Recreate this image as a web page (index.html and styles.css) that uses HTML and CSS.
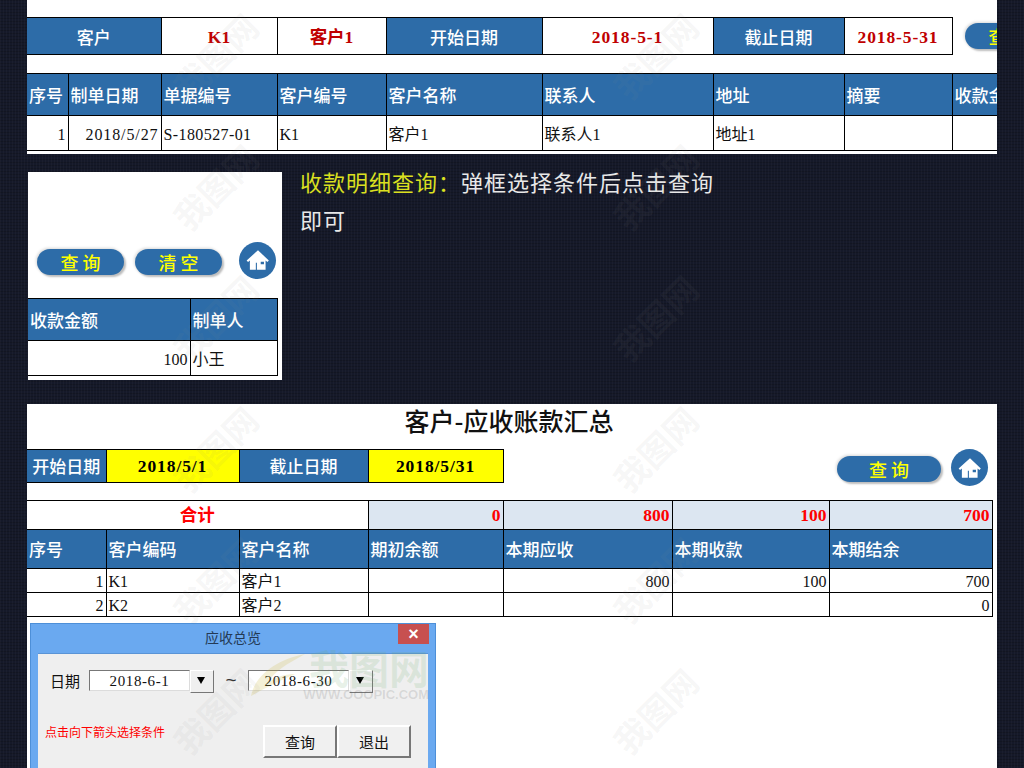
FILE: index.html
```html
<!DOCTYPE html>
<html lang="zh-CN">
<head>
<meta charset="UTF-8">
<meta name="viewport" content="width=device-width, initial-scale=1.0">
<title>应收账款</title>
<link rel="stylesheet" href="styles.css">
</head>
<body>

<div class="page">

  <div class="sheet sheet-top">
    <div class="query-row">
      <table class="grid crit">
        <colgroup><col class="w134"><col class="w116"><col class="w109"><col class="w156"><col class="w171"><col class="w131"><col class="w108"></colgroup>
        <tr>
          <th class="center">客户</th>
          <td class="red center">K1</td>
          <td class="red center">客户1</td>
          <th class="center">开始日期</th>
          <td class="red center date">2018-5-1</td>
          <th class="center">截止日期</th>
          <td class="red center date">2018-5-31</td>
        </tr>
      </table>
      <button class="pill pill-top">查 询</button>
    </div>
    <table class="grid detail">
      <colgroup><col class="w41"><col class="w93"><col class="w116"><col class="w109"><col class="w156"><col class="w171"><col class="w131"><col class="w108"><col class="w190"></colgroup>
      <tr class="head">
        <th>序号</th><th>制单日期</th><th>单据编号</th><th>客户编号</th><th>客户名称</th><th>联系人</th><th>地址</th><th>摘要</th><th>收款金额</th>
      </tr>
      <tr class="line">
        <td class="right">1</td><td class="right date">2018/5/27</td><td class="code">S-180527-01</td><td>K1</td><td>客户1</td><td>联系人1</td><td>地址1</td><td></td><td></td>
      </tr>
    </table>
  </div>

  <div class="middle">
    <div class="sheet sheet-side">
      <div class="side-tools">
        <button class="pill pill-small">查 询</button>
        <button class="pill pill-small">清 空</button>
        <span class="home">
          <svg viewBox="0 0 24 24" width="26" height="26"><path fill="#fff" fill-rule="evenodd" d="M12 3 1.500 12.500l1.300 1.400 1.700-1.400V21h5.500v-6.500h1V21h8v-8.500l1.700 1.400 1.300-1.400zM14.500 13.500h3v2.500h-3z"/></svg>
        </span>
      </div>
      <table class="grid side">
        <colgroup><col class="w162"><col class="w87"></colgroup>
        <tr class="head"><th>收款金额</th><th>制单人</th></tr>
        <tr class="line"><td class="right">100</td><td>小王</td></tr>
      </table>
    </div>
    <p class="note"><span class="note-key">收款明细查询：</span>弹框选择条件后点击查询即可</p>
  </div>

  <div class="sheet sheet-sum">
    <h2 class="title">客户-应收账款汇总</h2>
    <div class="date-row">
      <table class="grid dates">
        <colgroup><col class="w79"><col class="w133"><col class="w129"><col class="w135"></colgroup>
        <tr>
          <th class="center">开始日期</th>
          <td class="center yellow date">2018/5/1</td>
          <th class="center">截止日期</th>
          <td class="center yellow date">2018/5/31</td>
        </tr>
      </table>
      <button class="pill pill-wide">查 询</button>
      <span class="home">
        <svg viewBox="0 0 24 24" width="26" height="26"><path fill="#fff" fill-rule="evenodd" d="M12 3 1.500 12.500l1.300 1.400 1.700-1.400V21h5.500v-6.500h1V21h8v-8.500l1.700 1.400 1.300-1.400zM14.500 13.500h3v2.500h-3z"/></svg>
      </span>
    </div>
    <table class="grid summary">
      <colgroup><col class="w79"><col class="w133"><col class="w129"><col class="w135"><col class="w169"><col class="w157"><col class="w163"></colgroup>
      <tr class="total">
        <td colspan="3" class="center sum-label">合计</td>
        <td class="right sum">0</td><td class="right sum">800</td><td class="right sum">100</td><td class="right sum">700</td>
      </tr>
      <tr class="head-tall">
        <th>序号</th><th>客户编码</th><th>客户名称</th><th>期初余额</th><th>本期应收</th><th>本期收款</th><th>本期结余</th>
      </tr>
      <tr class="line-small"><td class="right">1</td><td>K1</td><td>客户1</td><td></td><td class="right">800</td><td class="right">100</td><td class="right">700</td></tr>
      <tr class="line-small"><td class="right">2</td><td>K2</td><td>客户2</td><td></td><td></td><td></td><td class="right">0</td></tr>
    </table>

    <div class="dialog">
      <div class="dialog-bar">
        <span class="dialog-title">应收总览</span>
        <span class="dialog-close">×</span>
      </div>
      <div class="dialog-body">
        <div class="dialog-dates">
          <span class="dialog-label">日期</span>
          <span class="combo"><span class="combo-text">2018-6-1</span><span class="combo-btn"></span></span>
          <span class="tilde">~</span>
          <span class="combo"><span class="combo-text">2018-6-30</span><span class="combo-btn"></span></span>
        </div>
        <div class="dialog-foot">
          <span class="hint">点击向下箭头选择条件</span>
          <span class="dialog-btns">
            <button class="win-btn">查询</button>
            <button class="win-btn">退出</button>
          </span>
        </div>
      </div>
      <svg class="logo-swoosh" viewBox="0 0 60 50" width="60" height="50"><path fill="#c9b63a" d="M2 44C6 24 26 8 56 2 38 12 24 20 20 30c8-6 18-8 26-8-14 6-30 14-44 22z"/></svg>
      <div class="logo-mark">
        <span class="logo-name">我图网</span>
        <span class="logo-url">WWW.OOOPIC.COM</span>
      </div>
    </div>
  </div>

</div>

<div class="marks">
  <span>我图网</span><span>我图网</span>
  <span>我图网</span><span>我图网</span>
  <span>我图网</span><span>我图网</span>
  <span>我图网</span><span>我图网</span>
  <span>我图网</span><span>我图网</span>
  <span>我图网</span><span>我图网</span>
</div>

</body>
</html>
```

FILE: styles.css
```css
html, body {
  margin: 0;
  padding: 0;
  height: 768px;
  overflow: hidden;
}
body {
  position: relative;
  background-color: #151929;
  background-image:
    linear-gradient(90deg, rgba(255,255,255,0.025) 1px, transparent 1px),
    linear-gradient(rgba(0,0,0,0.16) 1px, transparent 1px);
  background-size: 3px 3px;
  font-family: "Liberation Serif", "Noto Sans CJK SC", serif;
  font-size: 16px;
  color: #111;
}
.page {
  margin-left: 27px;
  width: 970px;
}
.sheet {
  background: #fff;
  overflow: hidden;
}

/* spreadsheet tables */
.grid {
  border-collapse: collapse;
  table-layout: fixed;
}
.grid th, .grid td {
  border: 1px solid #000;
  padding: 2px 2px 0;
  white-space: nowrap;
  overflow: hidden;
  text-align: left;
  line-height: 1;
}
.crit th, .crit td,
.detail th, .detail td,
.side th, .side td {
  padding-top: 4px;
}
.grid tr > :first-child {
  border-left: 0;
}
.grid th {
  background: #2d6ca8;
  color: #fff;
  font-size: 17px;
  font-weight: 500;
}
.center { text-align: center !important; }
.right { text-align: right !important; }
.red {
  color: #c00000;
  font-size: 17.5px;
  font-weight: 700;
}
.yellow {
  background: #ff0;
  color: #000;
  font-size: 17.5px;
  font-weight: 700;
}
.date { letter-spacing: 0.9px; }
.code { letter-spacing: 0.4px; }

.w41 { width: 41px; }
.w79 { width: 79px; }
.w87 { width: 87px; }
.w93 { width: 93px; }
.w108 { width: 108px; }
.w109 { width: 109px; }
.w116 { width: 116px; }
.w129 { width: 129px; }
.w131 { width: 131px; }
.w133 { width: 133px; }
.w134 { width: 134px; }
.w135 { width: 135px; }
.w156 { width: 156px; }
.w157 { width: 157px; }
.w162 { width: 162px; }
.w163 { width: 163px; }
.w169 { width: 169px; }
.w171 { width: 171px; }
.w190 { width: 190px; }

/* top panel */
.sheet-top {
  height: 154px;
  padding-top: 17px;
  box-sizing: border-box;
}
.query-row {
  display: flex;
  align-items: center;
  gap: 12px;
  width: 1100px;
}
.crit { width: 925px; }
.crit tr { height: 37px; }
.detail {
  width: 1115px;
  margin-top: 18px;
}
.head { height: 42px; }
.line { height: 35px; }

/* buttons */
.pill {
  display: block;
  flex: none;
  height: 26px;
  padding: 0;
  border: 0;
  border-radius: 13px;
  background: #2d6ca8;
  color: #ff0;
  font-family: "Noto Sans CJK SC", sans-serif;
  font-size: 18px;
  font-weight: 500;
  line-height: 26px;
  box-shadow: 2px 2px 2px #bdbdbd, -1px -1px 3px #d8d8d8;
}
.pill-top { width: 88px; }
.pill-small { width: 87px; margin-top: 4px; }
.pill-wide { width: 104px; margin: 7px 0 0 auto; }
.home {
  display: flex;
  flex: none;
  align-items: center;
  justify-content: center;
  width: 37px;
  height: 37px;
  border-radius: 50%;
  background: #2d6ca8;
}

/* middle */
.middle {
  display: flex;
  align-items: flex-start;
  margin-top: 18px;
  height: 232px;
}
.sheet-side {
  width: 254px;
  height: 208px;
  margin-left: 1px;
  flex: none;
}
.side-tools {
  display: flex;
  align-items: center;
  gap: 11px;
  height: 126px;
  padding: 50px 0 0 9px;
  box-sizing: border-box;
}
.side-tools .home { margin-left: 6px; }
.side { width: 249px; }
.note {
  margin: -10px 0 0 18px;
  width: 424px;
  font-family: "Noto Sans CJK SC", sans-serif;
  font-size: 22px;
  letter-spacing: 1px;
  line-height: 38px;
  color: #e8e8e8;
}
.note-key { color: #dbe020; }

/* summary */
.sheet-sum {
  height: 364px;
}
.title {
  margin: 0;
  height: 45px;
  padding-right: 6px;
  box-sizing: border-box;
  text-align: center;
  font-family: "Noto Sans CJK SC", sans-serif;
  font-size: 25px;
  font-weight: 500;
  line-height: 32px;
  color: #111;
}
.date-row {
  display: flex;
  align-items: flex-start;
  height: 37px;
  padding-right: 9px;
}
.date-row .home { margin-left: 10px; }
.dates { width: 476px; }
.dates tr { height: 33px; }
.summary {
  width: 965px;
  margin-top: 14px;
}
.total { height: 29px; }
.sum-label {
  color: #f00;
  font-size: 17.5px;
  font-weight: 700;
}
.sum {
  background: #dce6f1;
  color: #f00;
  font-size: 17.5px;
  font-weight: 700;
}
.head-tall { height: 39px; }
.line-small { height: 24px; }

/* dialog */
.dialog {
  position: relative;
  width: 406px;
  height: 200px;
  margin: 6px 0 0 3px;
  background: #6aa9f0;
  border: 1px solid #4d8fd8;
  box-sizing: border-box;
}
.dialog-bar {
  display: flex;
  justify-content: center;
  height: 29px;
  padding-top: 4px;
  box-sizing: border-box;
}
.dialog-title {
  font-family: "Noto Sans CJK SC", sans-serif;
  font-size: 14px;
  line-height: 18px;
  color: #243a55;
}
.dialog-close {
  position: absolute;
  top: 0;
  right: 6px;
  width: 31px;
  height: 20px;
  background: #c75050;
  color: #fff;
  font-family: "Liberation Sans", sans-serif;
  font-size: 18px;
  font-weight: 700;
  line-height: 20px;
  text-align: center;
}
.dialog-body {
  margin: 0 7px;
  height: 170px;
  padding: 15px 0 0 12px;
  box-sizing: border-box;
  background: #efefef;
  border-top: 1px solid #5a94d6;
}
.dialog-dates {
  display: flex;
  align-items: center;
  height: 22px;
}
.dialog-label {
  width: 39px;
  font-family: "Noto Sans CJK SC", sans-serif;
  font-size: 15px;
}
.combo {
  display: flex;
  height: 21px;
}
.combo-text {
  width: 101px;
  box-sizing: border-box;
  background: #fff;
  border: 1px solid #dcdcdc;
  border-top-color: #777;
  border-left-color: #777;
  font-size: 15px;
  letter-spacing: 0.6px;
  line-height: 20px;
  text-align: center;
}
.combo-btn {
  position: relative;
  width: 24px;
  height: 23px;
  box-sizing: border-box;
  background: #efefef;
  border: 1px solid #fff;
  border-right-color: #777;
  border-bottom-color: #777;
}
.combo-btn::after {
  content: "";
  position: absolute;
  left: 6px;
  top: 6px;
  border-left: 4px solid transparent;
  border-right: 4px solid transparent;
  border-top: 7px solid #000;
}
.tilde {
  width: 34px;
  text-align: center;
  font-family: "Liberation Sans", sans-serif;
  font-size: 19px;
  color: #333;
}
.dialog-foot {
  display: flex;
  justify-content: space-between;
  margin-top: 34px;
}
.hint {
  margin: -2px 0 0 -5px;
  font-family: "Noto Sans CJK SC", sans-serif;
  font-size: 12px;
  line-height: 18px;
  color: #f00;
}
.dialog-btns {
  display: flex;
  margin-right: 17px;
}
.win-btn {
  width: 74px;
  height: 33px;
  padding: 0;
  background: #f0f0f0;
  border: 2px solid #fff;
  border-right-color: #777;
  border-bottom-color: #777;
  font-family: "Noto Sans CJK SC", sans-serif;
  font-size: 15px;
  color: #111;
}
.logo-swoosh {
  position: absolute;
  top: 28px;
  left: 218px;
  opacity: 0.2;
  pointer-events: none;
}
.logo-mark {
  position: absolute;
  top: 22px;
  left: 248px;
  display: flex;
  flex-direction: column;
  align-items: flex-end;
  width: 150px;
  pointer-events: none;
}
.logo-name {
  font-family: "Noto Sans CJK SC", sans-serif;
  font-size: 40px;
  font-weight: 700;
  line-height: 42px;
  color: rgba(110,170,110,0.16);
}
.logo-url {
  font-family: "Liberation Sans", sans-serif;
  font-size: 13px;
  font-weight: 700;
  line-height: 14px;
  color: rgba(90,90,90,0.16);
}

/* watermarks over everything */
.marks {
  position: absolute;
  top: -10px;
  left: 165px;
  display: grid;
  grid-template-columns: repeat(2, 100px);
  grid-auto-rows: 131px;
  column-gap: 340px;
  pointer-events: none;
}
.marks span {
  display: flex;
  align-items: center;
  justify-content: center;
  white-space: nowrap;
  transform: rotate(-45deg);
  font-family: "Noto Sans CJK SC", sans-serif;
  font-size: 34px;
  font-weight: 700;
  color: rgba(140,140,140,0.08);
}
```
